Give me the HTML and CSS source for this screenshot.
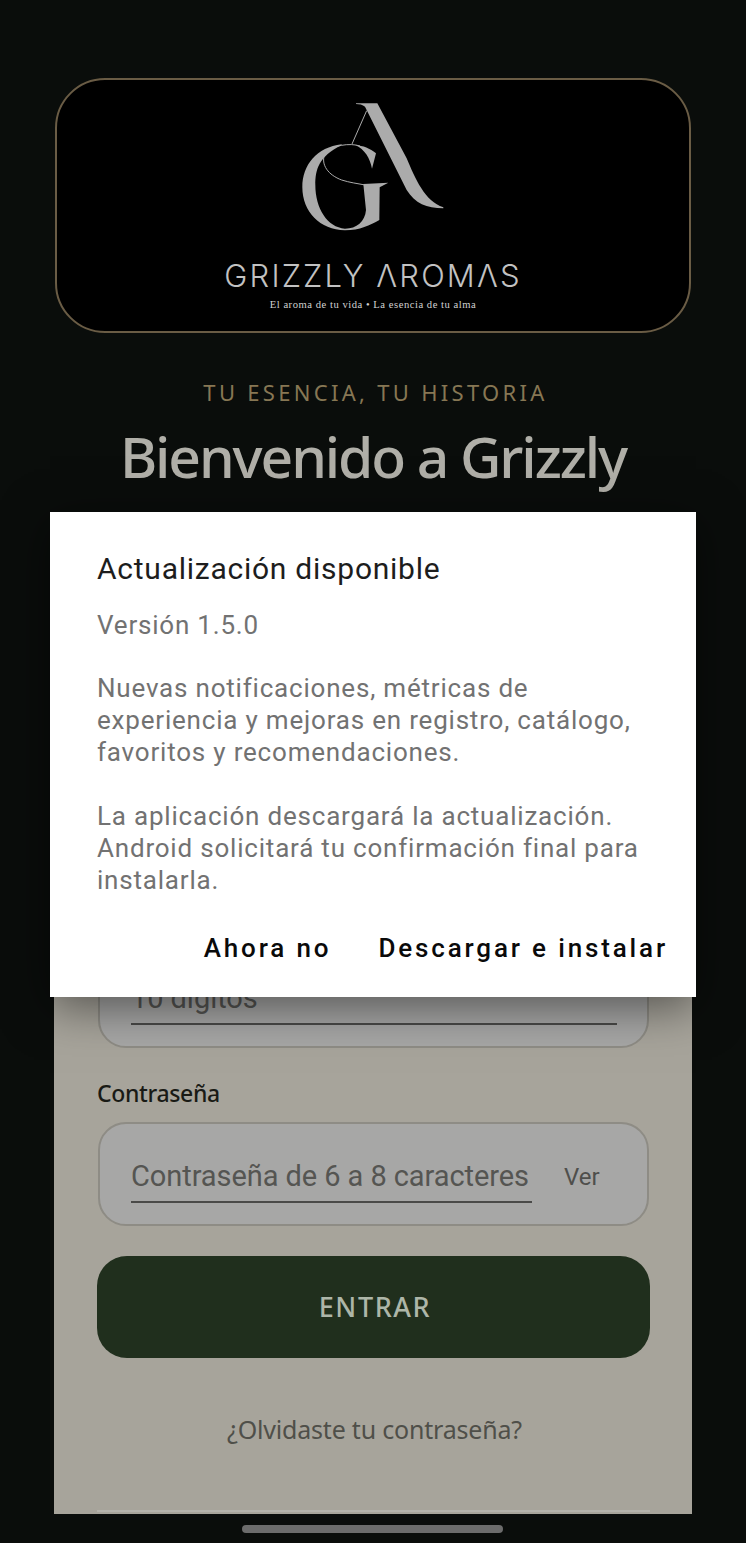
FILE: index.html
```html
<!DOCTYPE html>
<html lang="es">
<head>
<meta charset="utf-8">
<title>Grizzly Aromas</title>
<link rel="stylesheet" href="styles.css">
</head>
<body>
<main class="page">
  <header class="logo-card">
    <svg class="monogram" viewBox="0 0 720 450" aria-hidden="true">
      <path class="mark" d="M318 40 L382 40 L470 205 C495 265 525 335 580 352 L580 355 C530 355 495 340 470 300 L345 50 C338 44 328 42 318 42 Z"/>
      <path class="hair" d="M350 62 L306 162"/>
      <path class="mark" d="M275 163 C200 172 157 225 157 292 C157 365 210 420 285 421 C330 421 360 405 388 390 L389 292 L415 278 L340 282 L348 360 C345 395 320 416 285 416 C232 412 196 355 196 285 C196 240 205 200 275 165 Z"/>
      <path class="hair" d="M224 192 C212 225 235 255 275 270 C300 278 320 280 345 285"/>
      <path class="hair" d="M224 192 C245 165 300 158 330 168"/>
      <path class="mark" d="M315 165 C345 178 360 205 366 236 L378 190 C360 175 340 167 315 165 Z"/>
    </svg>
    <div class="brand" aria-label="GRIZZLY AROMAS">GRIZZLY ΛROMΛS</div>
    <div class="motto">El aroma de tu vida • La esencia de tu alma</div>
  </header>

  <p class="tagline">TU ESENCIA, TU HISTORIA</p>
  <h1 class="welcome">Bienvenido a Grizzly</h1>

  <section class="sheet">
    <div class="input-box">
      <div class="field"><span class="placeholder">10 dígitos</span></div>
    </div>
    <label class="field-label">Contraseña</label>
    <div class="input-box">
      <div class="field"><span class="placeholder">Contraseña de 6 a 8 caracteres</span></div>
      <span class="reveal">Ver</span>
    </div>
    <button class="submit" type="button">ENTRAR</button>
    <a class="forgot">¿Olvidaste tu contraseña?</a>
    <div class="divider"></div>
  </section>
</main>

<div class="dialog" role="dialog">
  <h2 class="dialog-title">Actualización disponible</h2>
  <p class="dialog-text dialog-version">Versión 1.5.0</p>
  <p class="dialog-text">Nuevas notificaciones, métricas de<br>experiencia y mejoras en registro, catálogo,<br>favoritos y recomendaciones.</p>
  <p class="dialog-text">La aplicación descargará la actualización.<br>Android solicitará tu confirmación final para<br>instalarla.</p>
  <div class="dialog-actions">
    <span class="action">Ahora no</span>
    <span class="action">Descargar e instalar</span>
  </div>
</div>

<div class="home-indicator"></div>
</body>
</html>
```

FILE: styles.css
```css
* { box-sizing: border-box; }

html, body {
  margin: 0;
  height: 1543px;
  overflow: hidden;
  background: #0a0d0b;
}

body { position: relative; }

.page {
  height: 1543px;
  padding: 78px 0 29px;
  display: flex;
  flex-direction: column;
  align-items: center;
}

.logo-card {
  width: 636px;
  height: 255px;
  flex: none;
  border: 2px solid #6a5c45;
  border-radius: 50px;
  background: #000;
  display: flex;
  flex-direction: column;
  align-items: center;
}

.monogram {
  width: 240px;
  height: 150px;
  margin-top: 10px;
  flex: none;
  margin-left: -6px;
}

.mark { fill: #ababab; }

.hair {
  fill: none;
  stroke: #ababab;
  stroke-width: 3;
}

.brand {
  margin-top: 19px;
  font: 300 31px/34px "Inter", sans-serif;
  letter-spacing: 2.15px;
  color: #c2c2c2;
  white-space: nowrap;
}

.motto {
  margin-top: 5px;
  font: 400 10.6px/14px "Liberation Serif", serif;
  letter-spacing: 0.53px;
  color: #d2d2d2;
  white-space: nowrap;
}

.tagline {
  margin: 44px 0 0 5px;
  font: 400 22px/30px "Noto Sans", sans-serif;
  letter-spacing: 3.3px;
  color: #877754;
  white-space: nowrap;
}

.welcome {
  margin: 13px 0 0;
  font: 500 57px/72px "Noto Sans", sans-serif;
  letter-spacing: -2.1px;
  color: #b0afa8;
  white-space: nowrap;
}

.sheet {
  width: 638px;
  flex: 1;
  min-height: 0;
  margin-top: 30px;
  padding: 0 42px 0 43px;
  background: #a7a49b;
  display: flex;
  flex-direction: column;
  justify-content: flex-end;
  overflow: hidden;
}

.input-box {
  height: 104px;
  flex: none;
  margin: 0 1px;
  padding: 30px 30px 0 31px;
  border: 2px solid #8e8c85;
  border-radius: 28px;
  background: #a7a7a6;
  display: flex;
  align-items: flex-start;
}

.field {
  flex: 1;
  height: 49px;
  border-bottom: 2px solid #4a4a48;
  font: 400 29px/44px "Roboto", sans-serif;
  letter-spacing: -0.07px;
  color: #555552;
  white-space: nowrap;
}

.reveal {
  width: 85px;
  padding-left: 32px;
  flex: none;
  font: 400 24px/46px "Roboto", sans-serif;
  color: #4f4f4c;
}

.field-label {
  margin-top: 30px;
  font: 500 23px/30px "Noto Sans", sans-serif;
  letter-spacing: -0.35px;
  color: #191a15;
}

.sheet .field-label + .input-box { margin-top: 14px; }

.submit {
  height: 102px;
  flex: none;
  margin-top: 30px;
  padding: 0 0 0 3px;
  border: 0;
  border-radius: 30px;
  background: #202f1d;
  font: 500 27px/34px "Noto Sans", sans-serif;
  letter-spacing: 1.6px;
  color: #adb6a8;
}

.forgot {
  margin: 56px 0 66px;
  padding-left: 2px;
  font: 400 25px/30px "Noto Sans", sans-serif;
  letter-spacing: -0.2px;
  color: #4f4f49;
  text-align: center;
}

.divider {
  height: 2px;
  flex: none;
  margin-bottom: 2px;
  background: #b5b3ac;
}

.dialog {
  position: absolute;
  left: 50px;
  top: 512px;
  width: 646px;
  height: 485px;
  padding: 38px 28px 0 47px;
  background: #fff;
  box-shadow: 0 10px 44px rgba(0, 0, 0, 0.5);
  display: flex;
  flex-direction: column;
}

.dialog-title {
  margin: 0;
  font: 400 30px/38px "Roboto", sans-serif;
  letter-spacing: 0.75px;
  color: #1d1d1d;
}

.dialog-text {
  margin: 0 0 32px;
  font: 400 26px/32px "Roboto", sans-serif;
  letter-spacing: 0.8px;
  color: #727272;
  white-space: nowrap;
}

.dialog-version { margin: 21px 0 31px; }

.dialog-actions {
  margin-top: 2px;
  display: flex;
  justify-content: flex-end;
  gap: 47px;
}

.action {
  font: 500 26px/36px "Roboto", sans-serif;
  letter-spacing: 2.85px;
  color: #0a0a0a;
  white-space: nowrap;
}

.home-indicator {
  position: absolute;
  left: 242px;
  top: 1525px;
  width: 261px;
  height: 8px;
  border-radius: 4px;
  background: #6c6c6c;
}
```
